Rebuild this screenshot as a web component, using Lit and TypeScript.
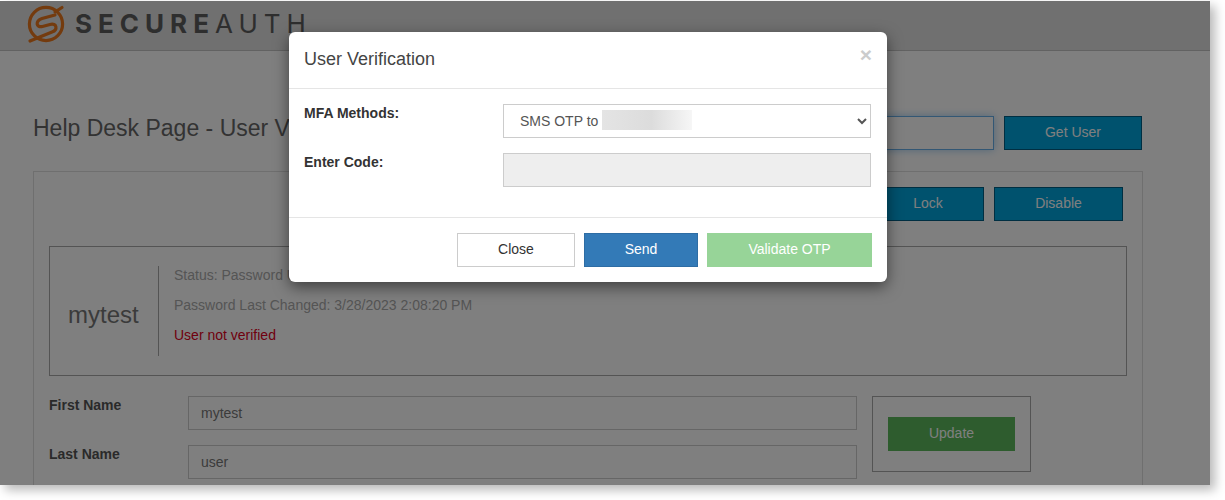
import { LitElement, html, css } from "lit";
import { customElement } from "lit/decorators.js";

@customElement("app-root")
export class AppRoot extends LitElement {
  static styles = css`
    :host {
      display: block;
      width: 1225px;
      height: 500px;
      position: relative;
      overflow: hidden;
      background: #fff;
      font-family: "Liberation Sans", Arial, sans-serif;
      font-size: 14px;
      color: #333;
    }
    * { box-sizing: border-box; }
    .shot {
      position: relative;
      width: 1210px;
      height: 484px;
      margin-top: 1px;
      overflow: hidden;
      background: #fff;
    }
    .frame-shadow {
      position: absolute;
      left: 0; top: 1px;
      width: 1210px; height: 484px;
      box-shadow: 5px 5px 10px rgba(0,0,0,.28);
    }
    .topbar {
      height: 50px;
      display: flex;
      align-items: center;
      gap: 9px;
      padding: 0 0 4px 26px;
      background: #e0e0e0;
      border-bottom: 1px solid #c4c4c4;
    }
    .logo { width: 40px; height: 40px; flex: none; }
    .brand {
      font-family: "Inter", "Open Sans", sans-serif;
      font-size: 26px;
      line-height: 30px;
      letter-spacing: 6px;
      color: #5c5c5c;
      font-weight: 400;
      white-space: nowrap;
    }
    .brand b { font-weight: 700; }
    main { padding-left: 33px; }
    .search {
      margin-top: 65px;
      width: 1109px;
      height: 34px;
      display: flex;
      align-items: center;
      gap: 10px;
    }
    h1 {
      flex: none;
      margin: 0 auto 9px 0;
      font-size: 23px;
      font-weight: 400;
      color: #666;
      white-space: nowrap;
    }
    .search input {
      width: 300px;
      border-color: #66afe9;
      box-shadow: 0 0 8px rgba(102,175,233,.6);
    }
    input {
      display: block;
      height: 34px;
      border: 1px solid #ccc;
      background: #fff;
      padding: 6px 12px;
      font: inherit;
      color: #555;
      outline: none;
    }
    .btn {
      height: 34px;
      border: 1px solid #005f84;
      background: #00a4dc;
      color: #fff;
      font: inherit;
      padding: 0 0 2px;
    }
    .search .btn { width: 138px; }
    .panel {
      margin-top: 21px;
      width: 1110px;
      height: 340px;
      border: 1px solid #dedede;
      padding: 15px;
    }
    .actions {
      display: flex;
      justify-content: flex-end;
      gap: 10px;
      padding-right: 4px;
    }
    .actions .btn { width: 129px; }
    .actions .btn.lock { width: 112px; }
    .info {
      margin-top: 25px;
      height: 130px;
      border: 1px solid #a8a8a8;
      display: flex;
      align-items: center;
    }
    .who {
      width: 109px;
      height: 90px;
      padding: 8px 0 0 18px;
      border-right: 1px solid #a8a8a8;
      display: flex;
      align-items: center;
      font-size: 24px;
      color: #777;
    }
    .facts { margin: -12px 0 0 15px; display: flex; flex-direction: column; gap: 10px; color: #aaa; line-height: 20px; }
    .red { color: #e00020; }
    .form { margin-top: 20px; display: flex; gap: 15px; align-items: flex-start; }
    .fields { display: flex; flex-direction: column; gap: 15px; }
    .row { display: flex; }
    .row label { width: 139px; font-weight: 700; line-height: 18px; color: #555; }
    .row input { width: 669px; color: #777; }
    .updater {
      width: 159px;
      height: 76px;
      border: 1px solid #a8a8a8;
      padding: 20px 15px;
    }
    .updater .btn { width: 127px; background: #5cb85c; border-color: #5cb85c; }
    .scrim {
      position: absolute;
      inset: 0;
      background: rgba(0,0,0,.5);
    }
    .modal {
      position: absolute;
      left: 289px;
      top: 31px;
      width: 598px;
      height: 250px;
      background: #fff;
      border-radius: 6px;
      box-shadow: 0 5px 15px rgba(0,0,0,.5);
    }
    .m-head {
      height: 57px;
      padding: 0 15px 2px;
      border-bottom: 1px solid #e5e5e5;
      display: flex;
      align-items: center;
      justify-content: space-between;
    }
    .m-head h2 { margin: 0; font-size: 18px; font-weight: 400; color: #444; }
    .x {
      font-size: 21px;
      font-weight: 700;
      color: #ccc;
      line-height: 1;
      margin: -10px 0 0;
    }
    .m-body {
      height: 128px;
      padding: 15px 16px 0 15px;
      display: flex;
      flex-direction: column;
      gap: 15px;
    }
    .m-row { display: flex; position: relative; }
    .m-row label { width: 199px; font-weight: 700; line-height: 19px; color: #333; }
    select, .m-row input { width: 368px; height: 34px; }
    select {
      border: 1px solid #ccc;
      background: #fff;
      padding: 6px 12px;
      font: inherit;
      color: #555;
      outline: none;
    }
    .m-row input { background: #eee; }
    .smudge {
      position: absolute;
      left: 298px;
      top: 6px;
      width: 90px;
      height: 20px;
      background: linear-gradient(90deg, #e4e4e4, #dcdcdc 55%, #f6f6f6);
    }
    .m-foot {
      height: 65px;
      border-top: 1px solid #e5e5e5;
      padding: 15px;
      display: flex;
      justify-content: flex-end;
      gap: 9px;
    }
    .mb { height: 34px; font: inherit; padding: 0 0 2px; border: 1px solid; }
    .close { width: 118px; background: #fff; border-color: #ccc; color: #333; }
    .send { width: 114px; background: #337ab7; border-color: #2e6da4; color: #fff; }
    .validate { width: 165px; background: #97d498; border-color: #97d498; color: #fff; }
  `;

  render() {
    return html`
      <div class="frame-shadow"></div>
      <div class="shot">
        <header class="topbar">
          <svg class="logo" viewBox="0 0 38 40" fill="none" stroke="#e8771c" stroke-width="3.2" stroke-linecap="round">
            <circle cx="19" cy="20" r="16.6"/>
            <path d="M35 3.5 L28 8"/>
            <path d="M28 11 L15 14.5 C8 17 9 24 15.5 22.5 L23 20.5 C30 18.5 31 26 25 28 L3 37"/>
          </svg>
          <div class="brand"><b>SECURE</b>AUTH</div>
        </header>
        <main>
          <div class="search">
            <h1>Help Desk Page - User V</h1>
            <input type="text" />
            <button class="btn">Get User</button>
          </div>
          <section class="panel">
            <div class="actions">
              <button class="btn lock">Lock</button>
              <button class="btn">Disable</button>
            </div>
            <div class="info">
              <div class="who">mytest</div>
              <div class="facts">
                <span>Status: Password Unlocked</span>
                <span>Password Last Changed: 3/28/2023 2:08:20 PM</span>
                <span class="red">User not verified</span>
              </div>
            </div>
            <div class="form">
              <div class="fields">
                <div class="row"><label>First Name</label><input type="text" .value=${"mytest"} /></div>
                <div class="row"><label>Last Name</label><input type="text" .value=${"user"} /></div>
              </div>
              <div class="updater"><button class="btn">Update</button></div>
            </div>
          </section>
        </main>
        <div class="scrim"></div>
        <div class="modal">
          <div class="m-head">
            <h2>User Verification</h2>
            <span class="x">×</span>
          </div>
          <div class="m-body">
            <div class="m-row">
              <label>MFA Methods:</label>
              <select><option>SMS OTP to</option></select>
              <span class="smudge"></span>
            </div>
            <div class="m-row">
              <label>Enter Code:</label>
              <input type="text" disabled />
            </div>
          </div>
          <div class="m-foot">
            <button class="mb close">Close</button>
            <button class="mb send">Send</button>
            <button class="mb validate">Validate OTP</button>
          </div>
        </div>
      </div>
    `;
  }
}
